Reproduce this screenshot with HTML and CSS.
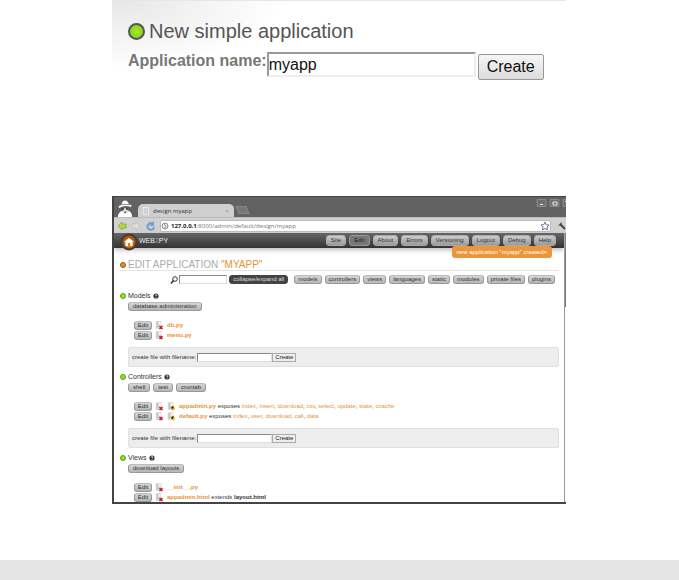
FILE: index.html
```html
<!DOCTYPE html>
<html lang="en">
<head>
<meta charset="utf-8">
<title>web2py simple application</title>
<link rel="stylesheet" href="styles.css">
</head>
<body>
<svg class="defs" aria-hidden="true">
  <symbol id="file" viewBox="0 0 8 9"><path d="M0 0h6v8H0z" fill="#ddd"/><path d="M1 1h2v6H1z" fill="#c4c4c4"/><path d="M3 1h3v3H3z" fill="#eee"/></symbol>
  <symbol id="cross" viewBox="0 0 8 9"><use href="#file"/><path d="M4 5l3 3M7 5L4 8" stroke="#c91c22" stroke-width="1.5"/></symbol>
  <symbol id="python" viewBox="0 0 8 9"><use href="#file"/><circle cx="5.5" cy="6.5" r="2" fill="#e8bd16"/><path d="M3.5 6a2 2 0 0 1 3-1.500L5 7z" fill="#28241b"/></symbol>
  <symbol id="help" viewBox="0 0 6 6"><circle cx="3" cy="3" r="2.600" fill="#333"/><path d="M2 2.300q1-1.300 2-.2q0 .8-1 1.200M3 4v.8" fill="none" stroke="#fff" stroke-width=".7"/></symbol>
</svg>
<main class="column">
  <form class="new-app">
    <h2 class="new-title"><span class="dot dot-large"></span>New simple application</h2>
    <div class="new-row">
      <label for="appname">Application name:</label>
      <input id="appname" type="text" value="myapp">
      <button type="button">Create</button>
    </div>
  </form>

  <section class="window">
    <div class="titlebar">
      <svg class="incognito" viewBox="0 0 18 19"><path d="M5 6L6 2q3-3 6 0l2 4z" fill="#fff"/><path d="M2 8q7-4 14-1" fill="none" stroke="#fff" stroke-width="2"/><path d="M6 9h7l-1 4H7z" fill="#ddd"/><path d="M5 10h3M10 10h3" stroke="#444" stroke-width="2"/><path d="M1 19q0-5 5-7l3 3 4-3q4 2 4 7z" fill="#fff"/><path d="M3 5h13" stroke="#888"/></svg>
      <div class="tab"><svg viewBox="0 0 6 8"><path d="M0 0h6v8H0z" fill="#e8e8e8"/><path d="M1 2h4M1 4h4M1 6h4" stroke="#aaa" stroke-width=".7"/></svg><span>design myapp</span><b>×</b></div>
      <div class="new-tab"></div>
      <svg class="controls" viewBox="0 0 30 8"><g fill="#707070" stroke="#999" stroke-width=".7"><path d="M1 .5h9v7H1zM14 .5h9v7h-9zM27 .5h9v7h-9z"/></g><path d="M4 5.500h3M17 3h4v3h-4zM29 2l4 4" fill="none" stroke="#eee"/></svg>
    </div>
    <div class="toolbar">
      <svg class="arrows" viewBox="0 0 40 10"><path d="M1 5l4-4v2h4v4H5v2z" fill="#b5d83b" stroke="#759b1e" stroke-width=".6"/><path d="M23 5l-4-4v2h-4v4h4v2z" fill="#ddd" stroke="#bbb" stroke-width=".6"/><path d="M36 3a3.300 3.300 0 1 0 1 3" fill="none" stroke="#6da0d0" stroke-width="2"/><path d="M37 0v5h-5z" fill="#6da0d0"/></svg>
      <div class="address"><svg viewBox="0 0 8 8"><circle cx="4" cy="4" r="3" fill="#eee" stroke="#888"/><path d="M3 2l2 2-1 2" fill="none" stroke="#999"/></svg><span><b>127.0.0.1</b>:8000/admin/default/design/myapp</span><svg class="star" viewBox="0 0 10 10"><path d="M5 1l1.200 2.700 2.800.3-2 2 .5 3L5 7.500 2.500 9 3 6 1 4l2.800-.3z" fill="#fff" stroke="#667696"/></svg></div>
      <svg class="wrench" viewBox="0 0 9 9"><path d="M3 3l5 5" stroke="#444" stroke-width="2"/><path d="M4 1a2 2 0 1 1-3 3l2-.5z" fill="#444"/></svg>
    </div>
    <div class="viewport">
      <header class="navbar">
        <svg class="home" viewBox="0 0 18 18"><circle cx="9" cy="9" r="8.500" fill="#4a3a30"/><circle cx="9" cy="9" r="6.500" fill="#a85a12"/><circle cx="9" cy="10" r="4.500" fill="#d67d22"/><path d="M4 9l5-4 5 4h-1.500v4h-2.300v-3H8v3H5.500V9z" fill="#fff"/></svg>
        <span class="logo">WEB<i>2</i>PY</span>
        <nav>
          <a href="#">Site</a><a class="active" href="#">Edit</a><a href="#">About</a><a href="#">Errors</a><a href="#">Versioning</a><a href="#">Logout</a><a href="#">Debug</a><a href="#">Help</a>
        </nav>
        <div class="flash">new application "myapp" created×</div>
      </header>
      <div class="page">
        <h1><span class="dot dot-orange"></span>EDIT APPLICATION <em>"MYAPP"</em></h1>
        <div class="filters">
          <label for="search"><svg viewBox="0 0 8 8"><circle cx="5" cy="3" r="2.300" fill="#fff" stroke="#333"/><path d="M3.500 4.500L1 7.500" stroke="#333" stroke-width="1.500"/></svg></label>
          <input id="search" type="text">
          <button class="pill dark" type="button">collapse/expand all</button>
          <div class="pills"><a class="pill" href="#">models</a><a class="pill" href="#">controllers</a><a class="pill" href="#">views</a><a class="pill" href="#">languages</a><a class="pill" href="#">static</a><a class="pill" href="#">modules</a><a class="pill" href="#">private files</a><a class="pill" href="#">plugins</a></div>
        </div>

        <section class="group">
          <h3><span class="dot"></span>Models<svg><use href="#help"/></svg></h3>
          <div class="actions"><a class="pill" href="#">database administration</a></div>
          <ul>
            <li><a class="pill" href="#">Edit</a><svg><use href="#cross"/></svg><p><a href="#"><b>db.py</b></a></p></li>
            <li><a class="pill" href="#">Edit</a><svg><use href="#cross"/></svg><p><a href="#"><b>menu.py</b></a></p></li>
          </ul>
          <form class="create"><label for="model">create file with filename:</label><input id="model" type="text"><button type="button">Create</button></form>
        </section>

        <section class="group">
          <h3><span class="dot"></span>Controllers<svg><use href="#help"/></svg></h3>
          <div class="actions"><a class="pill" href="#">shell</a><a class="pill" href="#">test</a><a class="pill" href="#">crontab</a></div>
          <ul>
            <li><a class="pill" href="#">Edit</a><svg><use href="#cross"/></svg><svg><use href="#python"/></svg><p><a href="#"><b>appadmin.py</b></a> exposes <a href="#">index</a>, <a href="#">insert</a>, <a href="#">download</a>, <a href="#">csv</a>, <a href="#">select</a>, <a href="#">update</a>, <a href="#">state</a>, <a href="#">ccache</a></p></li>
            <li><a class="pill" href="#">Edit</a><svg><use href="#cross"/></svg><svg><use href="#python"/></svg><p><a href="#"><b>default.py</b></a> exposes <a href="#">index</a>, <a href="#">user</a>, <a href="#">download</a>, <a href="#">call</a>, <a href="#">data</a></p></li>
          </ul>
          <form class="create"><label for="controller">create file with filename:</label><input id="controller" type="text"><button type="button">Create</button></form>
        </section>

        <section class="group">
          <h3><span class="dot"></span>Views<svg><use href="#help"/></svg></h3>
          <div class="actions"><a class="pill" href="#">download layouts</a></div>
          <ul>
            <li><a class="pill" href="#">Edit</a><svg><use href="#cross"/></svg><p><a href="#"><b>__init__.py</b></a></p></li>
            <li><a class="pill" href="#">Edit</a><svg><use href="#cross"/></svg><p><a href="#"><b>appadmin.html</b></a> extends <b>layout.html</b></p></li>
          </ul>
        </section>
      </div>
      <div class="scrollbar"><div class="thumb"></div></div>
    </div>
  </section>
</main>
<footer></footer>
</body>
</html>
```
FILE: styles.css
```css
* { box-sizing: border-box; }
body {
  margin: 0;
  min-height: 100vh;
  display: flex;
  flex-direction: column;
  background: #fff;
  color: #333;
  font: 6px/8px "Liberation Sans", Arial, sans-serif;
}
h1, h2, h3, p, ul { margin: 0; padding: 0; font-weight: normal; }
a { color: #e8923a; text-decoration: none; }
svg { flex: none; }
input, button { margin: 0; font: inherit; }
input { border: 1px solid #ddd; border-top-color: #888; border-left-color: #888; background: #fff; padding: 0; }
.defs { position: absolute; width: 0; height: 0; }
.column { width: 100%; max-width: 455px; margin: 0 auto; padding-right: 1px; }
footer { height: 20px; margin-top: auto; background: #e4e4e4; }

.dot {
  flex: none;
  width: 6px;
  height: 6px;
  border: 1px solid #62a01c;
  border-radius: 50%;
  background: #8be01c;
}
.dot-orange { background: #ee8a20; border-color: #8a5a28; }
.dot-large { width: 17px; height: 17px; border: 2px solid #555; background: radial-gradient(#a0e830, #7fd010); }

.new-app {
  height: 196px;
  padding: 18px 16px 0;
  border-top: 1px solid #e6e6e6;
  background: radial-gradient(ellipse 170px 68px at 0 0, #e6e6e6, #fff);
}
.new-title { display: flex; align-items: center; gap: 4px; color: #555; font-size: 20px; line-height: 25px; }
.new-row { display: flex; align-items: flex-start; padding-top: 8px; }
.new-row label { color: #777; font-size: 16px; line-height: 18px; font-weight: bold; }
.new-row input { width: 209px; height: 25px; border: 2px solid #eee; border-top-color: #999; border-left-color: #999; color: #111; font-size: 16px; }
.new-row button {
  width: 66px;
  height: 26px;
  margin: 2px 0 0 2px;
  padding: 0;
  border: 1px solid #999;
  border-radius: 2px;
  background: linear-gradient(#f6f6f6, #ddd);
  color: #111;
  font-size: 16px;
}

.window { border: solid #444; border-width: 1px 0 2px 2px; overflow: hidden; }
.titlebar { display: flex; align-items: flex-end; height: 20px; background: #626262; color: #333; }
.incognito { width: 18px; height: 17px; margin: 0 4px 0 2px; }
.tab {
  display: flex;
  align-items: center;
  gap: 4px;
  width: 96px;
  height: 13px;
  padding: 0 5px;
  border-radius: 5px 5px 0 0;
  background: #cfcfcf;
  font-family: "Open Sans", sans-serif;
}
.tab svg { width: 6px; height: 8px; }
.tab b { margin-left: auto; color: #888; font-weight: normal; }
.new-tab { width: 11px; height: 8px; margin: 0 0 3px 3px; border: 1px solid #888; background: #777; transform: skewX(22deg); }
.controls { width: 30px; height: 8px; margin: 0 0 10px auto; }
.toolbar { display: flex; align-items: center; height: 16px; background: #d1d1d1; border-top: 1px solid #bbb; }
.arrows { width: 40px; height: 10px; margin: 0 3px 0 3px; }
.address {
  flex: 1;
  display: flex;
  align-items: center;
  gap: 2px;
  height: 12px;
  border: 1px solid #bbb;
  border-radius: 2px;
  background: #fff;
  color: #777;
  font-family: "Open Sans", sans-serif;
}
.address svg { width: 8px; height: 8px; }
.address b { color: #222; }
.address .star { width: 10px; height: 10px; margin-left: auto; }
.wrench { width: 9px; height: 9px; margin-left: 6px; }

.viewport { display: grid; grid-template: auto 1fr / 1fr 2px; background: #fff; }
.navbar {
  display: flex;
  align-items: center;
  position: relative;
  height: 15px;
  padding: 0 8px 0 5px;
  background: linear-gradient(#666, #333);
  box-shadow: 0 2px 5px #bbb;
}
.home { width: 18px; height: 18px; margin: 0 1px; align-self: flex-start; }
.logo { color: #eee; font-size: 7px; }
.logo i { color: #8faaa4; font-style: normal; }
.navbar nav { display: flex; gap: 3px; margin-left: auto; }
nav a {
  height: 11px;
  padding: 0 4px;
  border: 1px solid #aaa;
  border-radius: 3px;
  background: linear-gradient(#ccc, #999);
  color: #333;
  line-height: 9px;
}
nav .active { background: #777; border-color: #999; color: #222; }
.flash {
  position: absolute;
  right: 12px;
  top: 13px;
  padding: 0 5px;
  border-radius: 3px;
  background: #ea963a;
  color: #fff;
  line-height: 12px;
}
.scrollbar { grid-area: 1 / 2 / 3 / 3; border-left: 1px solid #999; }
.thumb { height: 74px; background: #777; }

.page { padding: 11px 5px 0 6px; }
h1 { display: flex; align-items: center; gap: 2px; color: #aaa; font-size: 10px; line-height: 11px; border-bottom: 1px solid #e4e4e4; white-space: pre; }
h1 em { color: #ee9130; font-style: normal; margin-left: -2px; }
.filters { display: flex; align-items: center; justify-content: flex-end; height: 17px; margin-bottom: 2px; padding-right: 4px; }
.filters label, .filters svg { display: block; width: 8px; height: 8px; }
.filters input { width: 48px; height: 9px; margin: 0 2px 0 1px; }
.pills, .actions { display: flex; gap: 3px; }
.pills { margin-left: 6px; }
.pill {
  flex: none;
  height: 9px;
  padding: 0 3px;
  border: 1px solid #999;
  border-top-color: #bbb;
  border-radius: 3px;
  background: linear-gradient(#d6d6d6, #b6b6b6);
  color: #333;
  line-height: 7px;
}
.dark { background: #444; border-color: #444; color: #ddd; }

.group { padding-bottom: 4px; }
.group h3 { display: flex; align-items: center; gap: 2px; font-size: 7px; line-height: 12px; }
.group h3 svg { width: 6px; height: 6px; }
.actions, .group ul { padding-left: 8px; }
.actions { height: 10px; }
.actions .pill { padding: 0 4px; }
.group ul { padding: 8px 0 0 14px; list-style: none; }
.group li { display: flex; align-items: center; gap: 3px; height: 10px; }
.group li .pill { width: 18px; padding: 0; text-align: center; }
.group li svg { width: 9px; height: 9px; }
.create {
  display: flex;
  align-items: center;
  height: 20px;
  margin: 7px 0 0 8px;
  padding: 0 3px;
  border: 1px solid #e0e0e0;
  border-radius: 2px;
  background: #ededed;
}
.create input { width: 75px; height: 9px; margin-left: 1px; }
.create button { width: 24px; height: 9px; padding: 0; border: 1px solid #aaa; background: #eee; color: #222; line-height: 7px; }
.group:last-child { padding: 0; }
```
